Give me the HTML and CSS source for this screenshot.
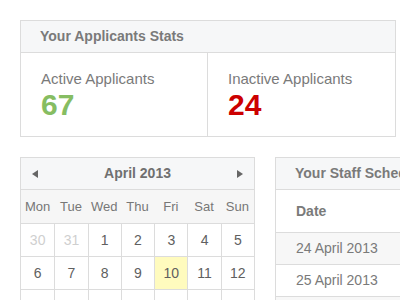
FILE: index.html
```html
<!DOCTYPE html>
<html lang="en">
<head>
  <meta charset="UTF-8">
  <meta name="viewport" content="width=device-width, initial-scale=1.0">
  <title>Dashboard</title>
  <link rel="stylesheet" href="styles.css">
</head>
<body>
  <div class="card stats">
    <div class="card-head">Your Applicants Stats</div>
    <div class="stats-body">
      <div class="stat">
        <div class="stat-label">Active Applicants</div>
        <div class="stat-num green">67</div>
      </div>
      <div class="stat">
        <div class="stat-label">Inactive Applicants</div>
        <div class="stat-num red">24</div>
      </div>
    </div>
  </div>

  <div class="row">
    <div class="card calendar">
      <div class="card-head cal-head">
        <span class="arrow left"></span>
        <span>April 2013</span>
        <span class="arrow right"></span>
      </div>
      <div class="cal-days">
        <span>Mon</span><span>Tue</span><span>Wed</span><span>Thu</span><span>Fri</span><span>Sat</span><span>Sun</span>
      </div>
      <div class="cal-grid">
        <span class="muted">30</span><span class="muted">31</span><span>1</span><span>2</span><span>3</span><span>4</span><span>5</span>
        <span>6</span><span>7</span><span>8</span><span>9</span><span class="today">10</span><span>11</span><span>12</span>
        <span></span><span></span><span></span><span></span><span></span><span></span><span></span>
      </div>
    </div>

    <div class="card schedule">
      <div class="card-head">Your Staff Schedule</div>
      <div class="sched-th">Date</div>
      <div class="sched-row odd">24 April 2013</div>
      <div class="sched-row">25 April 2013</div>
      <div class="sched-row odd"></div>
    </div>
  </div>
</body>
</html>
```

FILE: styles.css
```css
body {
  font-family: 'Liberation Sans', Arial, sans-serif;
  background: #fff;
  margin: 0;
  padding: 20px;
  width: 400px;
  height: 300px;
  box-sizing: border-box;
  overflow: hidden;
  color: #777;
}
.card {
  border: 1px solid #dcdcdc;
  background: #fff;
  box-sizing: border-box;
}
.card-head {
  background: #f6f7f8;
  border-bottom: 1px solid #dcdcdc;
  height: 31px;
  line-height: 31px;
  padding: 0 19px;
  font-size: 14px;
  font-weight: bold;
  color: #7a7a7a;
  white-space: nowrap;
}
.stats {
  width: 376px;
}
.stats-body {
  display: grid;
  grid-template-columns: 187px 1fr;
}
.stat {
  padding: 17px 20px 16px;
}
.stat:first-child {
  border-right: 1px solid #dcdcdc;
}
.stat-label {
  font-size: 15px;
  line-height: 18px;
  color: #7a7a7a;
}
.stat-num {
  margin-top: 2px;
  font-size: 30px;
  line-height: 30px;
  font-weight: bold;
}
.green { color: #86bd62; }
.red { color: #cc0000; }

.row {
  display: flex;
  gap: 20px;
  margin-top: 20px;
}
.calendar {
  flex: 0 0 235px;
}
.cal-head {
  display: flex;
  justify-content: space-between;
  align-items: center;
  padding: 0 11px;
  color: #707070;
}
.arrow {
  width: 0;
  height: 0;
  border-top: 4px solid transparent;
  border-bottom: 4px solid transparent;
}
.arrow.left { border-right: 6px solid #666; }
.arrow.right { border-left: 6px solid #666; }
.cal-days {
  display: grid;
  grid-template-columns: repeat(7, 1fr);
  background: #f6f6f6;
  height: 33px;
  line-height: 33px;
  text-align: center;
  font-size: 13px;
  color: #777;
}
.cal-grid {
  display: grid;
  grid-template-columns: repeat(7, 1fr);
  font-size: 14px;
  color: #606060;
  text-align: center;
}
.cal-grid span {
  border-top: 1px solid #dcdcdc;
  border-left: 1px solid #dcdcdc;
  height: 32px;
  line-height: 32px;
}
.cal-grid span:nth-child(7n+1) {
  border-left: none;
}
.cal-grid .muted { color: #cfcfcf; }
.cal-grid .today { background: #fffbbe; }

.schedule {
  flex: 0 0 300px;
}
.sched-th {
  height: 42px;
  line-height: 42px;
  padding: 0 20px;
  font-size: 14px;
  font-weight: bold;
  color: #7a7a7a;
  border-bottom: 1px solid #dcdcdc;
}
.sched-row {
  height: 31px;
  line-height: 31px;
  padding: 0 20px;
  font-size: 14px;
  color: #7a7a7a;
  border-bottom: 1px solid #dcdcdc;
}
.sched-row.odd { background: #f7f7f7; }
```
